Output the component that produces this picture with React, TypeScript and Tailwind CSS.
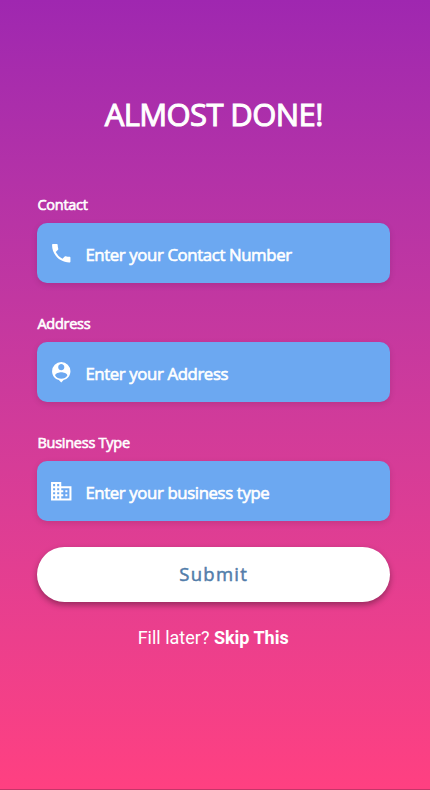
import React from "react";
import { MdPhone, MdPersonPin, MdBusiness } from "react-icons/md";

const icons = { phone: MdPhone, pin: MdPersonPin, business: MdBusiness };

function Field({ label, hint, icon }: { label: string; hint: string; icon: keyof typeof icons }) {
  const Icon = icons[icon];
  return (
    <label className="block h-[119px] shrink-0">
      <span className="block h-[28.5px] text-[14.5px] leading-[20px] tracking-[-0.25px] [-webkit-text-stroke:0.6px_currentColor]">{label}</span>
      <span className="flex h-[60px] items-center rounded-[10px] bg-[#6ca8f1] pl-[12px] shadow-[0_2px_6px_rgba(0,0,0,0.12)]">
        <Icon size={24.5} />
        <span className="mt-[3px] ml-[11.5px] text-[16.75px] tracking-[-0.37px] [-webkit-text-stroke:0.6px_currentColor]">{hint}</span>
      </span>
    </label>
  );
}

export default function App() {
  return (
    <main className="flex h-[790px] w-[430px] flex-col border-b border-[#c33668] bg-linear-to-b from-[#9f27b0] to-[#ff4081] pr-[40px] pl-[37.4px] font-['Open_Sans',sans-serif] text-white">
      <h1 className="mt-[93px] h-[101.9px] shrink-0 text-center text-[31px] leading-[42px] tracking-[-0.6px] [-webkit-text-stroke:1px_currentColor]">ALMOST DONE!</h1>
      <Field label="Contact" hint="Enter your Contact Number" icon="phone" />
      <Field label="Address" hint="Enter your Address" icon="pin" />
      <Field label="Business Type" hint="Enter your business type" icon="business" />
      <button className="mt-[-5.4px] h-[55px] shrink-0 rounded-full bg-white text-[18.5px] tracking-[1.25px] text-[#527daa] shadow-[0_3px_6px_rgba(0,0,0,0.35)] [-webkit-text-stroke:0.5px_currentColor]">Submit</button>
      <p className="mt-[24.5px] -ml-px text-center font-[Roboto,sans-serif] text-[18px] leading-[24px]">Fill later? <b>Skip This</b></p>
    </main>
  );
}
